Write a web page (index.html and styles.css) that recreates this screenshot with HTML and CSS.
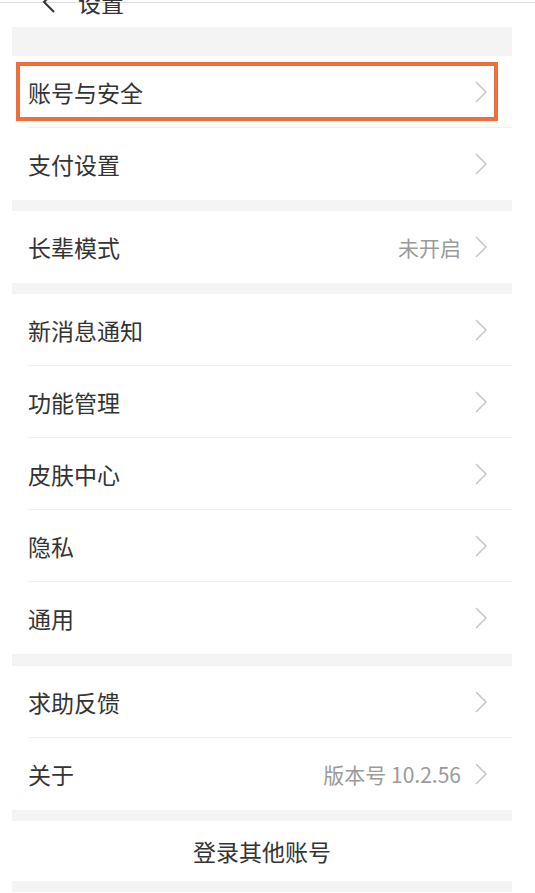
FILE: index.html
```html
<!DOCTYPE html>
<html lang="zh-CN">
<head>
  <meta charset="UTF-8" />
  <title>设置</title>
  <link rel="stylesheet" href="styles.css">
</head>
<body>
  <div class="topbar">
    <div class="title">
      <svg class="back" width="14" height="22" viewBox="0 0 14 22"><polyline points="12,1 2,11 12,21" /></svg>
      <span>设置</span>
    </div>
  </div>

  <div class="gap gap-top"></div>
  <div class="group">
    <div class="row">
      <span class="label">账号与安全</span>
      <svg class="chev" width="14" height="22" viewBox="0 0 14 22"><polyline points="2,1 12,11 2,21" /></svg>
      <div class="highlight"></div>
    </div>
    <div class="row">
      <span class="label">支付设置</span>
      <svg class="chev" width="14" height="22" viewBox="0 0 14 22"><polyline points="2,1 12,11 2,21" /></svg>
    </div>
  </div>

  <div class="gap"></div>
  <div class="group">
    <div class="row">
      <span class="label">长辈模式</span>
      <span class="value">未开启</span>
      <svg class="chev" width="14" height="22" viewBox="0 0 14 22"><polyline points="2,1 12,11 2,21" /></svg>
    </div>
  </div>

  <div class="gap"></div>
  <div class="group">
    <div class="row">
      <span class="label">新消息通知</span>
      <svg class="chev" width="14" height="22" viewBox="0 0 14 22"><polyline points="2,1 12,11 2,21" /></svg>
    </div>
    <div class="row">
      <span class="label">功能管理</span>
      <svg class="chev" width="14" height="22" viewBox="0 0 14 22"><polyline points="2,1 12,11 2,21" /></svg>
    </div>
    <div class="row">
      <span class="label">皮肤中心</span>
      <svg class="chev" width="14" height="22" viewBox="0 0 14 22"><polyline points="2,1 12,11 2,21" /></svg>
    </div>
    <div class="row">
      <span class="label">隐私</span>
      <svg class="chev" width="14" height="22" viewBox="0 0 14 22"><polyline points="2,1 12,11 2,21" /></svg>
    </div>
    <div class="row">
      <span class="label">通用</span>
      <svg class="chev" width="14" height="22" viewBox="0 0 14 22"><polyline points="2,1 12,11 2,21" /></svg>
    </div>
  </div>

  <div class="gap gap-wide"></div>
  <div class="group">
    <div class="row">
      <span class="label">求助反馈</span>
      <svg class="chev" width="14" height="22" viewBox="0 0 14 22"><polyline points="2,1 12,11 2,21" /></svg>
    </div>
    <div class="row">
      <span class="label">关于</span>
      <span class="value">版本号 10.2.56</span>
      <svg class="chev" width="14" height="22" viewBox="0 0 14 22"><polyline points="2,1 12,11 2,21" /></svg>
    </div>
  </div>

  <div class="gap"></div>
  <div class="switch">登录其他账号</div>
  <div class="gap gap-end"></div>
</body>
</html>
```

FILE: styles.css
```css
body { margin: 0; background: #fff; font-family: "Noto Sans CJK SC", "Noto Sans", sans-serif; color: #333; }

.topbar { height: 25px; margin-top: 2px; border-top: 1px solid #dcdcdc; box-sizing: border-box; }
.topbar .title { display: flex; align-items: center; gap: 22px; height: 22px; margin-top: -12px; padding-left: 42px; font-size: 23px; line-height: 22px; }
.topbar .back polyline { fill: none; stroke: #333; stroke-width: 2; }

.gap { height: 11px; margin: 0 23px 0 12px; background: #f4f4f4; }
.gap-top { height: 29px; }
.gap-wide { height: 12px; }
.gap-end { height: 11px; }

.group { margin: 0 23px 0 12px; background: #fff; }
.row { position: relative; display: flex; align-items: center; height: 72px; margin-left: 16px; padding-right: 24px; border-bottom: 1px solid #f0f0f0; box-sizing: border-box; }
.row:last-child { border-bottom: none; }
.row .label { flex: 1; font-size: 23px; }
.row .value { margin-right: 13px; font-size: 21px; color: #9a9a9a; }
.row .chev polyline { fill: none; stroke: #c6c6c6; stroke-width: 1.5; }

.highlight { position: absolute; left: -12px; top: 6px; width: 482px; height: 59px; border: 4px solid #ee6e3e; box-sizing: border-box; }

.switch { margin: 0 23px 0 12px; height: 60px; display: flex; align-items: center; justify-content: center; font-size: 23px; color: #333; }
```
